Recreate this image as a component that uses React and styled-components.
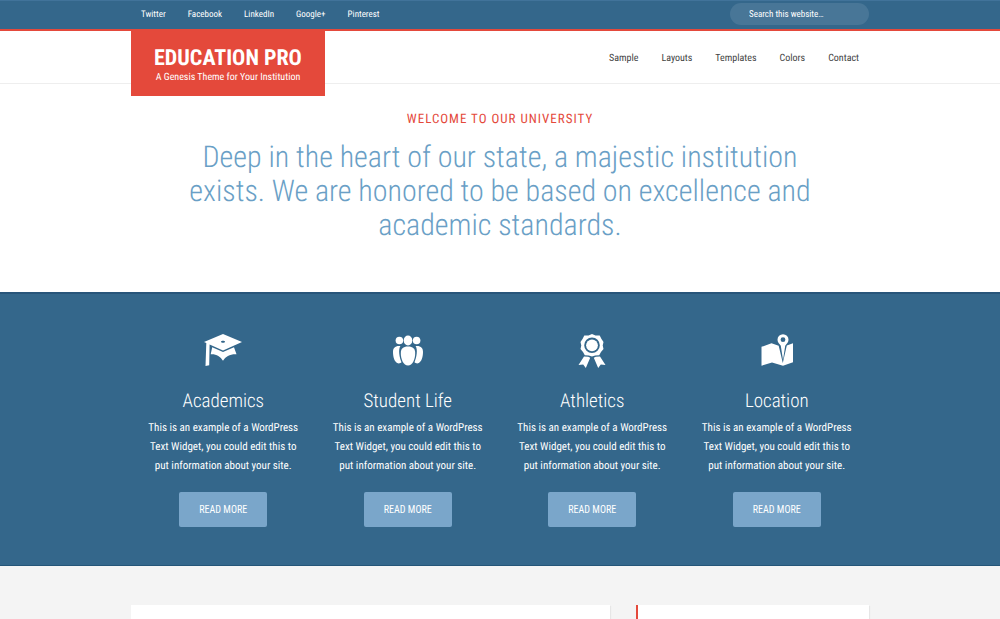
import React from "react";
import styled, { createGlobalStyle } from "styled-components";

const GlobalStyle = createGlobalStyle`
  *, *::before, *::after { box-sizing: border-box; }
  body {
    margin: 0;
    background: #f4f4f4;
    font-family: "Roboto Condensed", Roboto, "Liberation Sans", sans-serif;
    font-size: 12px;
    line-height: 19px;
    color: #444;
    text-rendering: geometricPrecision;
  }
  h1, h2, h3, p, ul { margin: 0; padding: 0; }
  a { color: inherit; text-decoration: none; }
`;

const Page = styled.div`
  display: flex;
  flex-direction: column;
  min-height: 100vh;
`;

const Wrap = styled.div`
  width: 100%;
  max-width: 738px;
  margin: 0 auto;
`;

const TopBar = styled.div`
  background: #34678b;
  border-top: 1px solid #41739a;
  border-bottom: 2px solid #e4493b;
`;

const TopRow = styled(Wrap)`
  display: flex;
  align-items: center;
  justify-content: space-between;
  height: 28px;
  padding-bottom: 2px;
`;

const LinkList = styled.ul`
  display: flex;
  list-style: none;
  gap: ${(p) => p.$gap};
  padding: 2px 10px 0;
  color: ${(p) => p.$color};
  font-size: ${(p) => p.$size};
`;

const Search = styled.input`
  width: 139px;
  height: 22px;
  padding: 0 19px;
  border: 0;
  border-radius: 11px;
  background: #487697;
  color: #fff;
  font: 400 9px/22px "Roboto Condensed", Roboto, sans-serif;
  outline: none;
  &::placeholder { color: #fff; opacity: 1; }
`;

const Header = styled.header`
  position: relative;
  z-index: 1;
  background: #fff;
  border-bottom: 1px solid #eee;
`;

const HeaderRow = styled(Wrap)`
  display: flex;
  align-items: center;
  justify-content: space-between;
  height: 52px;
`;

const Brand = styled.a`
  align-self: flex-start;
  width: 194px;
  padding: 16px 0 11px;
  background: #e4493b;
  color: #fff;
  text-align: center;
`;

const BrandName = styled.h1`
  font-size: 22px;
  line-height: 24px;
  font-weight: 700;
`;

const Tagline = styled.p`
  font-size: 10px;
  line-height: 14px;
`;

const Hero = styled.section`
  background: #fff;
  padding: 25px 0 49px;
  text-align: center;
`;

const HeroText = styled.div`
  width: 100%;
  max-width: 640px;
  margin: 0 auto;
`;

const Eyebrow = styled.p`
  color: #e4493b;
  font-size: 13px;
  line-height: 22px;
  letter-spacing: 1px;
  text-transform: uppercase;
`;

const Lead = styled.h2`
  padding-top: 10px;
  color: #6a9fc6;
  font-size: 30px;
  line-height: 34px;
  font-weight: 300;
`;

const Features = styled.section`
  background: #34678b;
  border-top: 2px solid #28557a;
  border-bottom: 1px solid #245578;
  padding: 37px 0 38px;
  color: #fff;
`;

const FeatureGrid = styled(Wrap)`
  display: grid;
  grid-template-columns: repeat(4, 1fr);
`;

const Feature = styled.article`
  display: flex;
  flex-direction: column;
  align-items: center;
  padding: 0 12px;
  text-align: center;
`;

const Icon = styled.svg`
  width: 40px;
  height: 40px;
  fill: currentColor;
`;

const FeatureTitle = styled.h3`
  padding: 19px 0 6px;
  font-size: 19px;
  line-height: 22px;
  font-weight: 300;
`;

const FeatureText = styled.p`
  font-size: 11px;
  line-height: 19px;
`;

const ReadMore = styled.button`
  width: 88px;
  height: 35px;
  margin-top: 17px;
  padding: 1px 0 0;
  border: 0;
  border-radius: 2px;
  background: #7aa6ca;
  color: #fff;
  font: 400 10px/34px "Roboto Condensed", Roboto, sans-serif;
  text-transform: uppercase;
  cursor: pointer;
`;

const Content = styled(Wrap)`
  display: grid;
  flex: 1;
  grid-template-columns: 479fr 233fr;
  gap: 26px;
  padding-top: 39px;
`;

const Card = styled.div`
  background: #fff;
  border-left: ${(p) => (p.$accent ? "2px solid #e4493b" : "0")};
  box-shadow: 1px 1px 1px #e6e6e6;
`;

const GradCap = () => (
  <Icon viewBox="0 0 40 40" aria-hidden="true">
    <path fillRule="evenodd" d="M1 11 20 3l19 8-19 8.500L6.600 13.500 6.200 34.300 2.500 35 3.300 12Zm17-.2c0 1.400 4 1.400 4 0s-4-1.400-4 0Z" />
    <path d="M9.200 16.300 20 21l11-4.700 2.500 6.900c-6-.4-11 2-13.500 6.600-2.500-4.600-7-7-12.300-6.600Z" />
  </Icon>
);

const People = () => (
  <Icon viewBox="0 0 40 40" aria-hidden="true">
    <circle cx="11.400" cy="9.500" r="3.800" />
    <circle cx="28.600" cy="9.500" r="3.800" />
    <ellipse cx="20" cy="9.500" rx="4.300" ry="5" />
    <path d="M12.400 15C7 14.500 5 17 5 21c0 5 1.400 9.500 4.200 11 1.500.8 3.300.3 4.300-.8-2-4.500-3.500-12.500-1.100-16.200ZM27.600 15c5.400-.5 7.400 2 7.400 6 0 5-1.400 9.500-4.200 11-1.500.8-3.300.3-4.300-.8 2-4.500 3.500-12.500 1.100-16.200Z" />
    <path d="M20 15.500c5 0 7.200 2.300 7.200 6.500 0 6.500-2.700 12.500-7.200 12.500S12.800 28.500 12.800 22c0-4.200 2.200-6.500 7.200-6.500Z" />
  </Icon>
);

const Ribbon = () => (
  <Icon viewBox="0 0 40 40" aria-hidden="true">
    <path fillRule="evenodd" d="M20 3l3.500 1.600 4.200 0 1.800 3.500L31.500 11l-.8 3.500.8 3.500-2.500 3-1.800 3.200-4 .2L20 25.600l-3.200-1.200-4-.2L11 21l-2.500-3 .8-3.500L8.500 11l2-2.900 1.800-3.500h4.200Zm0 3.500a7.800 7.800 0 1 0 0 15.600 7.800 7.800 0 0 0 0-15.600Z" />
    <circle cx="20" cy="14.300" r="5.900" />
    <path d="M12 25.500l4.200.2 2 1L13.800 37l-2.600-3.500-4.700.6ZM28 25.500l-4.200.2-2 1L26.200 37l2.600-3.500 4.700.6Z" />
  </Icon>
);

const MapPin = () => (
  <Icon viewBox="0 0 40 40" aria-hidden="true">
    <path d="M4.500 15.800 14.500 12.300l7.200 2.500L25.800 32l4-17.500L36 12.300v18.900l-10 3.500-11-3.200-10.500 3.200Z" />
    <path fillRule="evenodd" d="M26 3.200a5.500 5.500 0 0 1 5.500 5.500c0 2.400-1.800 4-3.300 6L26 29l-2.200-14.300c-1.500-2-3.300-3.600-3.300-6A5.500 5.500 0 0 1 26 3.200Zm0 3.100a2.400 2.400 0 1 0 0 4.800 2.400 2.400 0 0 0 0-4.800Z" />
  </Icon>
);

const social = ["Twitter", "Facebook", "LinkedIn", "Google+", "Pinterest"];
const menu = ["Sample", "Layouts", "Templates", "Colors", "Contact"];
const features = [
  { title: "Academics", Art: GradCap },
  { title: "Student Life", Art: People },
  { title: "Athletics", Art: Ribbon },
  { title: "Location", Art: MapPin },
];

const Links = ({ items, ...style }) => (
  <LinkList {...style}>
    {items.map((item) => (
      <li key={item}><a href="#">{item}</a></li>
    ))}
  </LinkList>
);

export default function App() {
  return (
    <Page>
      <GlobalStyle />
      <TopBar>
        <TopRow>
          <nav aria-label="Social">
            <Links items={social} $gap="22px" $color="#fff" $size="9px" />
          </nav>
          <Search type="search" aria-label="Search this website" placeholder="Search this website…" />
        </TopRow>
      </TopBar>
      <Header>
        <HeaderRow>
          <Brand href="#">
            <BrandName>EDUCATION PRO</BrandName>
            <Tagline>A Genesis Theme for Your Institution</Tagline>
          </Brand>
          <nav aria-label="Main">
            <Links items={menu} $gap="23px" $color="#444" $size="10px" />
          </nav>
        </HeaderRow>
      </Header>
      <Hero>
        <HeroText>
          <Eyebrow>Welcome to our university</Eyebrow>
          <Lead>
            Deep in the heart of our state, a majestic institution exists. We are
            honored to be based on excellence and academic standards.
          </Lead>
        </HeroText>
      </Hero>
      <Features>
        <FeatureGrid>
          {features.map(({ title, Art }) => (
            <Feature key={title}>
              <Art />
              <FeatureTitle>{title}</FeatureTitle>
              <FeatureText>
                This is an example of a WordPress Text Widget, you could edit this
                to put information about your site.
              </FeatureText>
              <ReadMore type="button">Read more</ReadMore>
            </Feature>
          ))}
        </FeatureGrid>
      </Features>
      <Content as="main">
        <Card />
        <Card $accent />
      </Content>
    </Page>
  );
}
